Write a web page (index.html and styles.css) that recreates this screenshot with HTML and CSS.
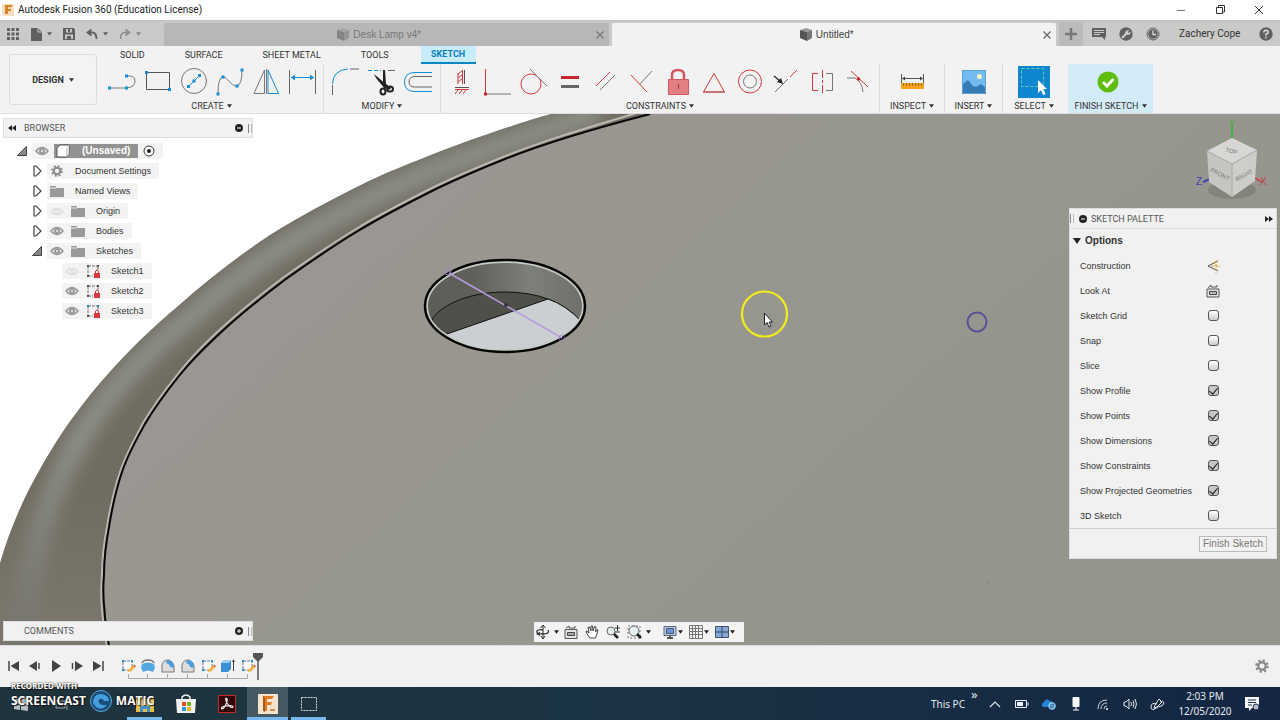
FILE: index.html
```html
<!DOCTYPE html>
<html lang="en">
<head>
<meta charset="utf-8">
<title>Autodesk Fusion 360 (Education License)</title>
<link rel="stylesheet" href="styles.css">
</head>
<body>
<svg class="defs" aria-hidden="true">
  <symbol id="eye" viewBox="0 0 14 12"><path d="M1 6Q7-1 13 6Q7 13 1 6Z" fill="#eee" stroke="#999" stroke-width="1.5"/><circle cx="7" cy="6" r="3" fill="#999"/><circle cx="7" cy="6" r="1" fill="#eee"/></symbol>
  <symbol id="eye-off" viewBox="0 0 14 12"><path d="M1 7Q7 0 13 7Q7 12 1 7Z" fill="none" stroke="#ddd" stroke-width="1.3"/><circle cx="7" cy="7" r="2" fill="none" stroke="#ddd"/><path d="M3 2L11 11" stroke="#ddd"/></symbol>
  <symbol id="folder" viewBox="0 0 14 12"><path d="M0 1H6V3H14V12H0Z" fill="#999"/><path d="M0 3H6" stroke="#eee"/></symbol>
  <symbol id="closed" viewBox="0 0 10 12"><path d="M2 1H4L9 6L4 11H2Z" fill="#fff" stroke="#444" stroke-width="1.2"/></symbol>
  <symbol id="open" viewBox="0 0 10 12"><path d="M9.500 1.500V10.500H.5Z" fill="#888" stroke="#444"/></symbol>
  <symbol id="sk" viewBox="0 0 14 14"><path d="M2 2H12M2 2V12M2 12H7M12 3V7" fill="none" stroke="#777" stroke-dasharray="3 1"/><path d="M1 1h2v2H1zM11 1h2v2h-2zM1 11h2v2H1z" fill="#555"/><path d="M8 9h6v5H8z" fill="#d8373d"/><path d="M9.500 9V7q1.500-2 3 0v2" fill="none" stroke="#d8373d"/></symbol>
  <symbol id="sk-blue" viewBox="0 0 14 14"><use href="#sk"/><path d="M1 1h2v2H1zM11 1h2v2h-2z" fill="#168dd6"/></symbol>
  <symbol id="gear" viewBox="0 0 14 14"><circle cx="7" cy="7" r="5.500" fill="none" stroke="#8d8d8d" stroke-width="2.600" stroke-dasharray="2.200 2.120"/><circle cx="7" cy="7" r="3.700" fill="none" stroke="#8d8d8d" stroke-width="2.400"/></symbol>
  <symbol id="cube" viewBox="0 0 14 14"><path d="M1 2L7 0L13 2L8 4Z" fill="#999"/><path d="M1 2L8 4V13L1 10Z" fill="#555"/><path d="M8 4L13 2V10L8 13Z" fill="#777"/></symbol>
  <symbol id="arrow" viewBox="0 0 6 4"><path d="M0 0H6L3 4Z" fill="currentColor"/></symbol>
  <symbol id="tsk" viewBox="0 0 16 16"><path d="M3 3H12V12H3Z" fill="#fafafa" stroke="#777" stroke-dasharray="3 1"/><path d="M2 2h2v2H2zM11 2h2v2h-2zM2 11h2v2H2z" fill="#2b8fd5"/><path d="M8.500 11.500L13 7.500L15 9.500L10.500 13.500L8 14Z" fill="#f3b23c"/><path d="M13 7.500l2 2l1-1l-2-2z" fill="#d9534f"/></symbol>
  <symbol id="fillet" viewBox="0 0 16 16"><path d="M2 14V7Q3 2 8 2H9Q14 4 14 9V14Z" fill="#ddd" stroke="#777"/><path d="M7 2Q14 2 14 10L10 9Q10 6 6 5Z" fill="#4a9fe0"/></symbol>
</svg>

<header class="titlebar">
  <svg width="12" height="14" viewBox="0 0 12 14"><path d="M0 1H12V13H2L0 11Z" fill="#f6ddbd"/><path d="M3 2H10V4H6V6H9V8H6V11H3Z" fill="#d98324"/></svg>
  <span class="title">Autodesk Fusion 360 (Education License)</span>
  <button class="win" aria-label="Minimise"><svg width="10" height="10"><path d="M1 5.500H9" stroke="#777"/></svg></button>
  <button class="win" aria-label="Restore"><svg width="10" height="10"><path d="M1.500 2.500h6v6h-6zM3.500 2V.5H9.500V7H8" fill="none" stroke="#333"/></svg></button>
  <button class="win" aria-label="Close"><svg width="10" height="10"><path d="M1 1L9 9M9 1L1 9" stroke="#333"/></svg></button>
</header>

<div class="docbar">
  <div class="quick">
    <button aria-label="Data panel"><svg width="12" height="12"><path d="M0 0h3v3H0zM4.500 0h3v3h-3zM9 0h3v3H9zM0 4.500h3v3H0zM4.500 4.500h3v3h-3zM9 4.500h3v3H9zM0 9h3v3H0zM4.500 9h3v3h-3zM9 9h3v3H9z" fill="#606060"/></svg></button>
    <button aria-label="File"><svg width="12" height="14"><path d="M1 1H8L12 5V14H1Z" fill="#606060"/><path d="M8 1V5H12" fill="none" stroke="#ccc"/></svg><svg class="ar"><use href="#arrow"/></svg></button>
    <button aria-label="Save"><svg width="12" height="12"><path d="M0 0H10.500L12 1.500V12H0Z" fill="#606060"/><path d="M3 1h6v3.500H3zM2 6.500h8V11H2z" fill="#c9c8c6"/><path d="M5 1h2v3H5zM4 8h4v3H4z" fill="#606060"/></svg></button>
    <button aria-label="Undo"><svg width="12" height="12"><path d="M5.500 1.500L1.500 4.500L5.500 7.500M2 4.500H6Q10.500 4.500 10.500 11" fill="none" stroke="#606060" stroke-width="1.800"/></svg><svg class="ar"><use href="#arrow"/></svg></button>
    <button class="dim" aria-label="Redo"><svg width="12" height="12"><path d="M6.500 1.500L10.500 4.500L6.500 7.500M10 4.500H6Q1.500 4.500 1.500 11" fill="none" stroke="#8b8b8b" stroke-width="1.600"/></svg><svg class="ar"><use href="#arrow"/></svg></button>
  </div>
  <div class="doc"><svg width="14" height="14" opacity=".5"><use href="#cube"/></svg><span>Desk Lamp v4*</span><button aria-label="Close tab"><svg width="8" height="8"><path d="M.5.5L7.500 7.500M7.500.5L.5 7.500" stroke="#777" stroke-width="1.300"/></svg></button></div>
  <div class="doc active"><svg width="14" height="14"><use href="#cube"/></svg><span>Untitled*</span><button aria-label="Close tab"><svg width="8" height="8"><path d="M.5.5L7.500 7.500M7.500.5L.5 7.500" stroke="#666" stroke-width="1.300"/></svg></button></div>
  <button class="plus" aria-label="New tab"><svg width="12" height="12"><path d="M6 0V12M0 6H12" stroke="#777" stroke-width="2.500"/></svg></button>
  <div class="account">
    <button aria-label="Notifications"><svg width="14" height="12"><path d="M0 0H14V9H13V12L10 9H0Z" fill="#606060"/><path d="M2 2.500H12M2 4.500H12M2 6.500H8" stroke="#ccc"/></svg></button>
    <button aria-label="Extensions"><svg width="14" height="14"><circle cx="7" cy="7" r="6.700" fill="#606060"/><path d="M3 11L7 7" stroke="#ccc" stroke-width="2.200"/><path d="M10.500 3L8.500 5L9.500 6L11.500 4.500Q12 8 8.500 8Q6 8 6 5.500Q6.500 3 10.500 3" fill="#ccc"/></svg></button>
    <button aria-label="Job status"><svg width="14" height="14"><circle cx="7" cy="7" r="6" fill="none" stroke="#606060"/><circle cx="7" cy="7" r="4.800" fill="#606060"/><path d="M7 3.500V7.500H10" fill="none" stroke="#ddd" stroke-width="1.300"/></svg></button>
    <button class="user">Zachery Cope</button>
    <button aria-label="Help"><svg width="14" height="14"><circle cx="7" cy="7" r="6.700" fill="#606060"/><path d="M4.800 5.500Q5 3.300 7 3.300Q9.300 3.400 9.200 5.300Q9 6.500 7 7.300V8.700M7 9.800V11.300" fill="none" stroke="#ddd" stroke-width="1.500"/></svg></button>
  </div>
</div>

<div class="ribbon">
  <button class="workspace">DESIGN <svg class="ar"><use href="#arrow"/></svg></button>
  <div class="ribbon-main">
    <nav class="tabs">
      <button>SOLID</button><button>SURFACE</button><button>SHEET METAL</button><button>TOOLS</button><button class="on">SKETCH</button>
    </nav>
    <div class="groups">
      <section class="group g-create">
        <div class="tools">
          <button aria-label="Line"><svg viewBox="0 0 36 36"><path d="M5 24H23Q31 23 31 17T23 12" fill="none" stroke="#777"/><path d="M4 22.500h3v3H4zM21 22.500h3v3h-3zM21 10.500h3v3h-3z" fill="#168dd6"/></svg></button>
          <button aria-label="Rectangle"><svg viewBox="0 0 36 36"><path d="M6.500 8.500H29.500V25.500H6.500Z" fill="none" stroke="#555"/><path d="M5 7h3v3H5zM28 24h3v3h-3z" fill="#168dd6"/></svg></button>
          <button aria-label="Circle"><svg viewBox="0 0 36 36"><circle cx="18" cy="17" r="12.500" fill="none" stroke="#777"/><path d="M12 23L24 11" stroke="#168dd6"/><path d="M11 21h3v3h-3zM16.500 15.500h3v3h-3zM22 10h3v3h-3z" fill="#168dd6"/></svg></button>
          <button aria-label="Spline"><svg viewBox="0 0 36 36"><path d="M6 30Q6 13 11 13C16 13 18 22 25 22Q30 21 30 6" fill="none" stroke="#777"/><path d="M4.500 28.500h3v3h-3zM9.500 11.500h3v3h-3zM23.500 20.500h3v3h-3zM28.500 4.500h3v3h-3z" fill="#168dd6"/></svg></button>
          <button aria-label="Mirror"><svg viewBox="0 0 36 36"><path d="M16.500 6V29.500H6Z" fill="none" stroke="#777"/><path d="M20 6V29.500H30.500Z" fill="none" stroke="#168dd6"/><path d="M18.500 5V30" stroke="#777"/></svg></button>
          <button aria-label="Dimension"><svg viewBox="0 0 36 36"><path d="M5.500 6V30M31.500 6V30" stroke="#666"/><path d="M7 13.500H30" stroke="#168dd6"/><path d="M7 13.500l4-3v6zM30 13.500l-4-3v6z" fill="#168dd6"/></svg></button>
        </div>
        <button class="glabel">CREATE <svg class="ar"><use href="#arrow"/></svg></button>
      </section>
      <section class="group g-modify">
        <div class="tools">
          <button aria-label="Fillet"><svg viewBox="0 0 36 36"><path d="M4.500 31V21M22 5H31" stroke="#666"/><path d="M4.500 20Q5 6 20 5" fill="none" stroke="#168dd6"/></svg></button>
          <button aria-label="Trim"><svg viewBox="0 0 36 36"><path d="M4 6.500H17" stroke="#168dd6" stroke-dasharray="4 2"/><path d="M24 6.500H31" stroke="#666"/><path d="M19 6L21 6L22 20L27 24L25 26L19 21Z" fill="#222"/><path d="M10 10L24 22L21 25L12 14Z" fill="#222"/><ellipse cx="19" cy="27.500" rx="2.500" ry="3" fill="none" stroke="#222" stroke-width="2"/><ellipse cx="26" cy="25" rx="3" ry="2.600" fill="none" stroke="#222" stroke-width="2"/></svg></button>
          <button aria-label="Offset"><svg viewBox="0 0 36 36"><path d="M32 8.500H14Q4.500 9 4.500 18T14 27.500H32" fill="none" stroke="#168dd6"/><path d="M32 12.500H14.500Q9 13 9 18T14.500 23H32" fill="none" stroke="#666"/></svg></button>
        </div>
        <button class="glabel">MODIFY <svg class="ar"><use href="#arrow"/></svg></button>
      </section>
      <section class="group g-constraints">
        <div class="tools">
          <button aria-label="Horizontal/Vertical"><svg viewBox="0 0 36 36"><path d="M20.500 6V20M11 23.500H25" stroke="#555"/><path d="M18.500 6V20M11 25.500H25M18 7l-4 3M18 11l-4 3M18 15l-4 3M14 9v11M14 26l-3 4M18 26l-3 4M22 26l-3 4" stroke="#d8373d"/></svg></button>
          <button aria-label="Coincident"><svg viewBox="0 0 36 36"><path d="M6 30H31" stroke="#777"/><path d="M5.500 5V30" stroke="#d8373d"/><path d="M4 28.500h3v3H4z" fill="#d02028"/></svg></button>
          <button aria-label="Tangent"><svg viewBox="0 0 36 36"><circle cx="15" cy="20" r="10" fill="none" stroke="#d8373d"/><path d="M14 5L31 22" stroke="#777"/></svg></button>
          <button aria-label="Equal"><svg viewBox="0 0 36 36"><path d="M9 12H27V15H9z" fill="#c7262c"/><path d="M9 21H27V24H9z" fill="#666"/></svg></button>
          <button aria-label="Parallel"><svg viewBox="0 0 36 36"><path d="M8 22L22 8" stroke="#d8373d"/><path d="M12 26L27 11" stroke="#777"/></svg></button>
          <button aria-label="Perpendicular"><svg viewBox="0 0 36 36"><path d="M7 11L23 28" stroke="#d8373d"/><path d="M16 20L28 7" stroke="#777"/></svg></button>
          <button aria-label="Fix"><svg viewBox="0 0 36 36"><path d="M12 16V11Q12 6 18 6T24 11V16" fill="none" stroke="#d25960" stroke-width="2.500"/><path d="M8.500 15.500H28.500V30.500H8.500Z" fill="#e27f82" stroke="#d25960"/><path d="M18.500 20V25" stroke="#a33"/></svg></button>
          <button aria-label="Midpoint"><svg viewBox="0 0 36 36"><path d="M18 9.500L28.500 28H7.500Z" fill="none" stroke="#d8373d"/><path d="M7 28H29" stroke="#a85557"/></svg></button>
          <button aria-label="Concentric"><svg viewBox="0 0 36 36"><circle cx="18" cy="17.500" r="11.500" fill="none" stroke="#d8373d"/><circle cx="18" cy="17.500" r="6.500" fill="none" stroke="#777"/></svg></button>
          <button aria-label="Collinear"><svg viewBox="0 0 36 36"><path d="M7 28L20 15" stroke="#777"/><path d="M22 13L29 6" stroke="#d8373d"/><path d="M6 12L12 17" stroke="#333" stroke-width="1.500"/><path d="M15 20L9 18L13 14Z" fill="#222"/></svg></button>
          <button aria-label="Symmetry"><svg viewBox="0 0 36 36"><path d="M14 9.500H8.500V26.500H14" fill="none" stroke="#d8373d"/><path d="M22 9.500H28.500V26.500H22" fill="none" stroke="#777"/><path d="M18.500 6V30" stroke="#d8373d" stroke-dasharray="8 2 3 2"/></svg></button>
          <button aria-label="Curvature"><svg viewBox="0 0 36 36"><path d="M11 7L28 23" stroke="#d8373d"/><path d="M7 14H15Q22 18 23 28" fill="none" stroke="#777"/><circle cx="18.500" cy="15" r="1.700" fill="#d02028"/></svg></button>
        </div>
        <button class="glabel">CONSTRAINTS <svg class="ar"><use href="#arrow"/></svg></button>
      </section>
      <section class="group g-inspect">
        <div class="tools"><button aria-label="Measure"><svg viewBox="0 0 36 36"><path d="M7.500 10V20M29.500 10V20M9 14.500H28" stroke="#555"/><path d="M8 14.500l3-2v4zM29 14.500l-3-2v4z" fill="#444"/><path d="M7 19H30V25H7z" fill="#f5a11c"/><path d="M9 20.500H29" stroke="#75520c" stroke-width="2" stroke-dasharray="1 2"/></svg></button></div>
        <button class="glabel">INSPECT <svg class="ar"><use href="#arrow"/></svg></button>
      </section>
      <section class="group g-insert">
        <div class="tools"><button aria-label="Insert image"><svg viewBox="0 0 36 36"><path d="M6 6H30V30H6z" fill="#72baf0"/><circle cx="23.500" cy="12.500" r="2.500" fill="#fdf6c8"/><path d="M6 21L12 16L17 22L20 23L25 20L30 24V30H6Z" fill="#347cb8"/><path d="M6.500 6.500h23v23h-23z" fill="none" stroke="#5d9fd0"/></svg></button></div>
        <button class="glabel">INSERT <svg class="ar"><use href="#arrow"/></svg></button>
      </section>
      <section class="group g-select">
        <div class="tools"><button aria-label="Select"><svg viewBox="0 0 36 36"><path d="M2 2H34V34H2z" fill="#0f86cf"/><path d="M5.500 4.500H27.500V22.500H5.500z" fill="none" stroke="#65d0a5" stroke-dasharray="3 2"/><path d="M22 16V29L25 26L27 31L29.500 30L27.500 25H31Z" fill="#fff"/></svg></button></div>
        <button class="glabel">SELECT <svg class="ar"><use href="#arrow"/></svg></button>
      </section>
      <section class="group g-finish">
        <div class="tools"><button aria-label="Finish sketch"><svg viewBox="0 0 36 36"><circle cx="15" cy="18" r="10.500" fill="#5fbe0d"/><path d="M10 18L14 22L20.500 15" fill="none" stroke="#fff" stroke-width="2.800"/></svg></button></div>
        <button class="glabel">FINISH SKETCH <svg class="ar"><use href="#arrow"/></svg></button>
      </section>
    </div>
  </div>
</div>

<main class="canvas">
  <svg class="scene" viewBox="0 114 1280 531" preserveAspectRatio="xMinYMin slice">
    <defs>
      <linearGradient id="plane" x1="0" y1="0" x2="1" y2=".5"><stop offset="0" stop-color="#9c9692"/><stop offset=".3" stop-color="#9a9691"/><stop offset=".5" stop-color="#98978f"/><stop offset="1" stop-color="#95958d"/></linearGradient>
      <linearGradient id="wall"><stop offset="0" stop-color="#5d5d57"/><stop offset=".3" stop-color="#60605b"/><stop offset=".65" stop-color="#7d7f7a"/><stop offset="1" stop-color="#6d6e69"/></linearGradient>
      <linearGradient id="rimshade" x1="0" y1="0" x2="0" y2="1"><stop offset="0" stop-color="#706d63"/><stop offset=".7" stop-color="#716c61"/><stop offset="1" stop-color="#7d786f"/></linearGradient>
      <linearGradient id="glow" x1="0" y1="0" x2="0" y2="1"><stop offset="0" stop-color="#8c8e84"/><stop offset=".6" stop-color="#8c8f86"/><stop offset="1" stop-color="#74736b"/></linearGradient>
      <filter id="soft" x="-20%" y="-20%" width="140%" height="140%"><feGaussianBlur stdDeviation="8"/></filter>
      <clipPath id="rim"><path d="M-2 646V570C8 534 22 498 50 452C66 425 86 399 107 375C131 348 152 328 177 307C204 283 233 260 261 241C289 222 318 207 345 193C372 179 390 171 421 159C455 145 511 125 551 114H652V646Z"/></clipPath>
      <clipPath id="hole"><ellipse cx="505" cy="306" rx="79" ry="45"/></clipPath>
    </defs>
    <rect y="114" width="1280" height="531" fill="#fff"/>
    <g clip-path="url(#rim)">
      <rect x="-2" y="114" width="660" height="532" fill="url(#rimshade)"/>
      <path d="M20 660C26 575 42 510 67 463C85 425 105 400 128 374C148 352 166 336 187 320C230 281 280 246 337 216C390 186 440 164 600 112" fill="none" stroke="url(#glow)" stroke-width="22" filter="url(#soft)"/>
    </g>
    <path d="M109 646C107 634 105 622 104.500 610C103 598 103 587 104 575C104 558 106 543 109 527C112 508 116 490 122 472C128 454 136 440 145 424C155 407 167 391 179 376C191 361 200 352 215 338C237 317 262 297 286 279C310 262 333 246 358 231C384 215 412 201 438 188C461 177 480 169 505 159C550 141 600 127 650 114H1280V646Z" fill="url(#plane)"/>
    <path d="M107 646C105 634 103 622 102 610C101 598 101 587 102 575C102 558 104 543 107 527C110 508 114 490 120 472C126 454 134 440 143 423C153 406 165 390 177 375C189 360 198 350 213 336C235 315 260 295 284 277C308 260 331 244 356 229C382 213 410 199 436 186C459 175 478 167 503 157C548 139 590 127 640 112" fill="none" stroke="#bcb8b1" stroke-width="2"/>
    <path d="M109 646C107 634 105 622 104.500 610C103 598 103 587 104 575C104 558 106 543 109 527C112 508 116 490 122 472C128 454 136 440 145 424C155 407 167 391 179 376C191 361 200 352 215 338C237 317 262 297 286 279C310 262 333 246 358 231C384 215 412 201 438 188C461 177 480 169 505 159C550 141 600 127 650 114" fill="none" stroke="#080808" stroke-width="2"/>
    <g clip-path="url(#hole)">
      <rect x="424" y="258" width="164" height="98" fill="url(#wall)"/>
      <path d="M432 319C446 300 478 292 505 292Q555 292 582 322L570 356H440Z" fill="#50504a" stroke="#111"/>
      <path d="M444 335L548 299Q566 305 582 322L575 356H435Z" fill="#cbcfd1"/>
      <path d="M444 335L548 299Q566 305 582 322" fill="none" stroke="#111"/>
    </g>
    <ellipse cx="505" cy="306" rx="78" ry="44" fill="none" stroke="#c6cac5" stroke-width="2"/>
    <ellipse cx="505" cy="306" rx="80" ry="46" fill="none" stroke="#050505" stroke-width="2.500"/>
    <path d="M449 273L562 338" stroke="#b79ce0" stroke-width="1.500"/>
    <circle cx="448" cy="272" r="3" fill="none" stroke="#9b86c4"/><circle cx="562" cy="338" r="3" fill="none" stroke="#9b86c4" opacity=".6"/><circle cx="506" cy="305" r="2" fill="#37363e"/>
    <circle cx="977" cy="322" r="9.500" fill="none" stroke="#5a5199" stroke-width="2"/>
    <circle cx="989" cy="583" r="1" fill="#85857e"/>
    <circle cx="764.500" cy="314" r="22.500" fill="none" stroke="#f4ec18" stroke-width="2.200"/>
    <path d="M764.500 313V325L767 322.500L769 327L771 326L769 322H772.500Z" fill="#fff" stroke="#222"/>
  </svg>

  <aside class="browser">
    <div class="bar">
      <button class="collapse" aria-label="Collapse"><svg width="8" height="6"><path d="M4 0V6L0 3ZM8 0V6L4 3Z" fill="#222"/></svg></button>
      <span>BROWSER</span>
      <button aria-label="Minimise browser"><svg width="8" height="8"><circle cx="4" cy="4" r="4" fill="#222"/><path d="M2 4H6" stroke="#fff"/></svg></button><i class="grip"></i>
    </div>
    <ul class="tree">
      <li class="root"><svg class="tw"><use href="#open"/></svg><div class="node"><svg class="ic"><use href="#eye"/></svg><span class="sel"><svg width="14" height="14"><path d="M1 4L4 1H13V10L10 13H1Z" fill="#fff" stroke="#555"/><path d="M10 4V13L13 10V1Z" fill="#ddd"/></svg><b>(Unsaved)</b></span><svg width="12" height="12"><circle cx="6" cy="6" r="5" fill="#fff" stroke="#333"/><circle cx="6" cy="6" r="2" fill="#222"/></svg></div></li>
      <li class="l1"><svg class="tw"><use href="#closed"/></svg><div class="node"><svg class="ic"><use href="#gear"/></svg><span>Document Settings</span></div></li>
      <li class="l1"><svg class="tw"><use href="#closed"/></svg><div class="node"><svg class="ic"><use href="#folder"/></svg><span>Named Views</span></div></li>
      <li class="l1"><svg class="tw"><use href="#closed"/></svg><div class="node"><svg class="ic"><use href="#eye-off"/></svg><svg class="ic"><use href="#folder"/></svg><span>Origin</span></div></li>
      <li class="l1"><svg class="tw"><use href="#closed"/></svg><div class="node"><svg class="ic"><use href="#eye"/></svg><svg class="ic"><use href="#folder"/></svg><span>Bodies</span></div></li>
      <li class="l1"><svg class="tw"><use href="#open"/></svg><div class="node"><svg class="ic"><use href="#eye"/></svg><svg class="ic"><use href="#folder"/></svg><span>Sketches</span></div></li>
      <li class="l2"><div class="node"><svg class="ic"><use href="#eye-off"/></svg><svg class="ic tall"><use href="#sk"/></svg><span>Sketch1</span></div></li>
      <li class="l2"><div class="node"><svg class="ic"><use href="#eye"/></svg><svg class="ic tall"><use href="#sk"/></svg><span>Sketch2</span></div></li>
      <li class="l2"><div class="node"><svg class="ic"><use href="#eye"/></svg><svg class="ic tall"><use href="#sk-blue"/></svg><span>Sketch3</span></div></li>
    </ul>
  </aside>

  <svg class="viewcube" width="76" height="90" viewBox="0 0 76 90">
    <ellipse cx="37" cy="72" rx="24" ry="9" fill="#777870" opacity=".6"/>
    <path d="M37 4V20" stroke="#45b045" stroke-width="2"/><path d="M35 2L37 6L40 2" fill="none" stroke="#45b045"/>
    <path d="M15 61L8 64" stroke="#4540b4" stroke-width="2"/><path d="M60 60L67 64" stroke="#c24a50" stroke-width="2"/>
    <path d="M12 33L37 20L62 32L37 46Z" fill="#d7d7d5"/><path d="M12 33L37 46V79L14 64Z" fill="#c5c5c2"/><path d="M62 32L37 46V79L60 63Z" fill="#cdcdca"/>
    <path d="M12 33L37 46L62 32M37 46V79" fill="none" stroke="#aaa"/>
    <g font-family="Liberation Sans, sans-serif" font-size="6" text-anchor="middle" fill="#777"><text transform="translate(36 35) rotate(15)">TOP</text><text transform="translate(24 58) rotate(28)">FRONT</text><text transform="translate(50 59) rotate(-28)">RIGHT</text></g>
    <g font-family="Liberation Sans, sans-serif" font-size="10"><text x="1" y="67" fill="#4540b4">Z</text><text x="65" y="67" fill="#b9474c">X</text></g>
  </svg>

  <aside class="palette">
    <div class="phead"><i class="grip"></i><button aria-label="Minimise palette"><svg width="8" height="8"><circle cx="4" cy="4" r="4" fill="#222"/><path d="M2 4H6" stroke="#fff"/></svg></button><span>SKETCH PALETTE</span><button aria-label="Dock"><svg width="8" height="6"><path d="M0 0V6L4 3ZM4 0V6L8 3Z" fill="#222"/></svg></button></div>
    <button class="options"><svg width="8" height="6"><path d="M0 0H8L4 6Z" fill="#222"/></svg>Options</button>
    <div class="prow"><span>Construction</span><button aria-label="Construction"><svg width="14" height="14"><path d="M12 2L2 7L12 12" fill="none" stroke="#555"/><path d="M10 1V14M5 7H14M7 3L13 9" stroke="#f0a03c" stroke-dasharray="3 1"/></svg></button></div>
    <div class="prow"><span>Look At</span><button aria-label="Look at"><svg width="14" height="14"><path d="M1 5H13V13H1z" fill="#e4e4e4" stroke="#555"/><path d="M3.500 7.500h7v3h-7z" fill="#bbb" stroke="#444"/><path d="M2 4L5 1V3H11V1" fill="none" stroke="#555"/></svg></button></div>
    <label class="prow"><span>Sketch Grid</span><input type="checkbox"></label>
    <label class="prow"><span>Snap</span><input type="checkbox"></label>
    <label class="prow"><span>Slice</span><input type="checkbox"></label>
    <label class="prow"><span>Show Profile</span><input type="checkbox" checked></label>
    <label class="prow"><span>Show Points</span><input type="checkbox" checked></label>
    <label class="prow"><span>Show Dimensions</span><input type="checkbox" checked></label>
    <label class="prow"><span>Show Constraints</span><input type="checkbox" checked></label>
    <label class="prow"><span>Show Projected Geometries</span><input type="checkbox" checked></label>
    <label class="prow"><span>3D Sketch</span><input type="checkbox"></label>
    <div class="pfoot"><button>Finish Sketch</button></div>
  </aside>

  <div class="comments bar"><span>COMMENTS</span><button aria-label="Expand comments"><svg width="8" height="8"><circle cx="4" cy="4" r="4" fill="#222"/><path d="M2 4H6M4 2V6" stroke="#fff"/></svg></button><i class="grip"></i></div>

  <div class="navbar">
    <button class="w24" aria-label="Orbit"><svg width="14" height="14"><path d="M7 0V14M4.500 3L7 0L9.500 3M5 11l2 3l2-3" fill="none" stroke="#333"/><path d="M12 5Q14 9 7 9T1 6Q3 4 7 5" fill="none" stroke="#333" stroke-width="1.300"/><path d="M0 9l4-2v4z" fill="#333"/></svg><svg class="ar"><use href="#arrow"/></svg></button>
    <button class="w22" aria-label="Look at"><svg width="14" height="14"><path d="M1 4.500H13V13.500H1z" fill="#e4e4e4" stroke="#555"/><path d="M3.500 7.500h7v3h-7z" fill="#aaa" stroke="#444"/><path d="M2 3L5 1V3H11V1" fill="none" stroke="#555"/></svg></button>
    <button class="w22" aria-label="Pan"><svg width="14" height="14"><path d="M5 13L1.500 8L1 6L3 7L4 8L3 2.500L4.500 2L6 6L6 1H7.500L8 6L9.500 1.500L11 2L10.500 7L12 4.500L13 5L11.500 10L10.500 13Z" fill="#fff" stroke="#444"/></svg></button>
    <button class="w22" aria-label="Zoom"><svg width="14" height="14"><circle cx="5" cy="6" r="4" fill="#e8f0f2" stroke="#666"/><path d="M8 9L12 13" stroke="#222" stroke-width="2.500"/><path d="M11.500 0V6M9 3H14M9 7H14" stroke="#333"/></svg></button>
    <button class="w32" aria-label="Fit"><svg width="16" height="14"><path d="M1 1H13V13H1Z" fill="none" stroke="#777" stroke-dasharray="2 2"/><circle cx="7" cy="6" r="5" fill="#e3eff0" stroke="#666"/><path d="M10 9L14 13" stroke="#222" stroke-width="2.500"/></svg><svg class="ar"><use href="#arrow"/></svg></button>
    <button class="w26" aria-label="Display"><svg width="14" height="14"><path d="M1 1.500H13V10.500H1z" fill="#b8ccec" stroke="#567"/><path d="M3.500 3.500h7v5h-7z" fill="#6f96d6" stroke="#456"/><path d="M4 13H10M7 10v3" stroke="#555" stroke-width="2"/></svg><svg class="ar"><use href="#arrow"/></svg></button>
    <button class="w26" aria-label="Grid"><svg width="14" height="14"><path d="M.5.5h13v13H.5zM3.500 0V14M6.500 0V14M9.500 0V14M0 3.500H14M0 6.500H14M0 9.500H14" fill="none" stroke="#777"/></svg><svg class="ar"><use href="#arrow"/></svg></button>
    <button class="w26" aria-label="Viewports"><svg width="14" height="12"><path d="M.5.5h13v11H.5z" fill="#85a5db" stroke="#456"/><path d="M7 0V12M0 6H14" stroke="#345"/></svg><svg class="ar"><use href="#arrow"/></svg></button>
  </div>
</main>

<footer class="timeline">
  <div class="play">
    <button aria-label="Start"><svg width="12" height="12"><path d="M1 1V11" stroke="#444" stroke-width="1.500"/><path d="M11 1V11L2.500 6Z" fill="#444"/></svg></button>
    <button aria-label="Back"><svg width="12" height="12"><path d="M8 1V11L0 6Z" fill="#444"/><path d="M10 3V9" stroke="#444" stroke-width="1.500"/></svg></button>
    <button aria-label="Play"><svg width="12" height="12"><path d="M2 0V12L11 6Z" fill="#444"/></svg></button>
    <button aria-label="Forward"><svg width="12" height="12"><path d="M4 1V11L12 6Z" fill="#444"/><path d="M1.500 3V9" stroke="#444" stroke-width="1.500"/></svg></button>
    <button aria-label="End"><svg width="12" height="12"><path d="M11 1V11" stroke="#444" stroke-width="1.500"/><path d="M1 1V11L9.500 6Z" fill="#444"/></svg></button>
  </div>
  <div class="track">
    <div class="feats">
      <svg><use href="#tsk"/></svg>
      <svg viewBox="0 0 16 16"><path d="M2 6Q8 3 14 6L15 10L13 14Q8 11 3 14L1 10Z" fill="#54a8e2"/><path d="M2 5Q3 2 8 2T14 5" fill="none" stroke="#777" stroke-width="1.500"/></svg>
      <svg><use href="#fillet"/></svg><svg><use href="#fillet"/></svg><svg><use href="#tsk"/></svg>
      <svg viewBox="0 0 16 16"><path d="M1 5L4 2H11V11L8 14H1Z" fill="#3b8fd4"/><path d="M1 5L4 2H11L9 5Z" fill="#9bd0f4"/><path d="M13.500 2V13" stroke="#444"/><path d="M12 4l1.500-3L15 4z" fill="#444"/></svg>
      <svg><use href="#tsk"/></svg>
    </div>
    <svg class="ticks" width="140" height="6"><path d="M10.500 0V4.500H129.500V0M29.500 0V4M49.500 0V4M69.500 0V4M89.500 0V4M109.500 0V4" fill="none" stroke="#aaa"/></svg>
  </div>
  <svg class="marker" width="10" height="28"><path d="M0 1H10V5L6 9H4L0 5Z" fill="#555"/><path d="M5 7V28" stroke="#555" stroke-width="1.500"/></svg>
  <button class="prefs" aria-label="Preferences"><svg width="14" height="14"><use href="#gear"/></svg></button>
</footer>

<div class="taskbar">
  <div class="apps">
    <button aria-label="Start"><svg width="14" height="14"><path d="M0 2L6 1V7H0zM7 1L14 0V7H7zM0 8H6V13L0 12zM7 8H14V14L7 13z" fill="#b8c0c4"/></svg></button>
    <button aria-label="Task view"><svg width="16" height="14"><path d="M2 4H11V11H2zM0 1V3M13 1V13" fill="none" stroke="#9ba5aa"/></svg></button>
    <span class="spacer"></span>
    <button class="run" aria-label="File Explorer"><svg width="20" height="18"><path d="M1 2H8L10 4H19V17H1z" fill="#e9bd45"/><path d="M1 6H19V10H1z" fill="#f9de89"/><path d="M5 17V11H15V17H12V14H8V17Z" fill="#3f91ce"/></svg></button>
    <button aria-label="Store"><svg width="20" height="20"><path d="M6 6V3Q10-1 14 3V6" fill="none" stroke="#eee" stroke-width="1.500"/><path d="M0 5H20L19 19H1Z" fill="#f2f2f2"/><path d="M6 8h4v4H6z" fill="#e64a27"/><path d="M11 8h4v4h-4z" fill="#76b82a"/><path d="M6 13h4v4H6z" fill="#249ad8"/><path d="M11 13h4v4h-4z" fill="#f2b51d"/></svg></button>
    <button aria-label="Acrobat"><svg width="18" height="18"><path d="M.5.5h17v17H.5z" fill="#30080a" stroke="#c52a25"/><path d="M8 3Q10 3 8.500 8Q6 14 4 14Q2 12 8 11Q15 10 15 12Q13 14 9 8Q7 4 8 3" fill="none" stroke="#f0eaea" stroke-width="1.200"/></svg></button>
    <button class="run current" aria-label="Fusion 360"><svg width="20" height="20"><path d="M0 0H20V20H0z" fill="#f5e3ce"/><path d="M5 2H16L14 5H9V8H14L13 11H9V17H6Z" fill="#df7d24"/><path d="M5 2V17L7 18V4Z" fill="#a7591b"/><path d="M12 16H17" stroke="#c99259" stroke-width="2"/></svg></button>
    <button class="run" aria-label="Recorder"><svg width="18" height="16"><path d="M1.500 1.500h15v13h-15z" fill="none" stroke="#d6dde0" stroke-dasharray="2 1"/></svg></button>
  </div>
  <div class="tray">
    <span class="pc">This PC</span><span class="more">»</span>
    <button aria-label="Hidden icons"><svg width="12" height="8"><path d="M1 7L6 2L11 7" fill="none" stroke="#dde4ea" stroke-width="1.200"/></svg></button>
    <button aria-label="Battery"><svg width="14" height="8"><path d="M.5.5h11v7H.5zM13 2.500v3" fill="none" stroke="#eef"/><path d="M2 2h6v4H2z" fill="#eef"/></svg></button>
    <button aria-label="OneDrive"><svg width="15" height="12"><path d="M2 9Q-1 6 3 4Q5-1 9 3Q13 3 13 9Z" fill="#2683d3"/><circle cx="11" cy="8" r="3.700" fill="#92c8ee"/><path d="M9 7H13L12 5.500M13 9H9L10 10.500" fill="none" stroke="#135b99"/></svg></button>
    <button aria-label="Microphone"><svg width="10" height="14"><rect x="1.500" y="0" width="7" height="10" rx="1" fill="#f5f7fa"/><path d="M5 10V13M2 13H8" stroke="#f5f7fa"/></svg></button>
    <button aria-label="Wi-Fi"><svg width="13" height="12"><path d="M2 11Q2 2 11 2M5 11Q5 5 11 5M8 11Q8 8 11 8" fill="none" stroke="#c5cfda"/><circle cx="11" cy="11" r="1" fill="#fff"/></svg></button>
    <button aria-label="Volume"><svg width="14" height="12"><path d="M1 4H3L6 1V11L3 8H1ZM8 4Q9 6 8 8M10 2.500Q12 6 10 9.500M12 1Q15 6 12 11" fill="none" stroke="#dde4ea"/></svg></button>
    <button class="pen" aria-label="Pen"><svg width="16" height="14"><path d="M10 2L13 5L8 10L5 11L6 8ZM8 7Q2 5 2 10T9 10Q15 9 15 6Q14 3 11 5" fill="none" stroke="#e5eaf0"/></svg></button>
    <time><span>2:03 PM</span><span>12/05/2020</span></time>
    <button aria-label="Action centre"><svg width="16" height="14"><path d="M1 0H15V11H8L5 14V11H1Z" fill="#f4f6f8"/><path d="M4 3H12M4 5.500H12M4 8H8" stroke="#203048"/><circle cx="12" cy="10" r="3" fill="#b3bcc6" stroke="#203048"/></svg></button>
  </div>
</div>

<div class="watermark">
  <span class="rec">RECORDED WITH</span>
  <div class="brand"><span>SCREENCAST</span><svg width="22" height="22"><circle cx="11" cy="11" r="10.500" fill="#194e7c" stroke="#5da5d8"/><path d="M3 13Q3 4 11 4Q19 5 19 11H14Q13 8 10 9Q7 11 10 14Q13 16 17 15Q13 20 8 18Q4 16 3 13" fill="#43a0dc"/></svg><span>MATIC</span></div>
</div>
</body>
</html>
```

FILE: styles.css
```css
* { box-sizing: border-box; }
body {
  margin: 0;
  min-height: 100vh;
  display: flex;
  flex-direction: column;
  position: relative;
  background: #f1f1f1;
  color: #333;
  font: 9px/12px "Liberation Sans", Arial, sans-serif;
  overflow-x: hidden;
}
button { border: 0; padding: 0; margin: 0; background: none; color: inherit; font: inherit; display: inline-flex; align-items: center; justify-content: center; white-space: nowrap; }
svg { display: block; flex: none; }
.defs { position: absolute; width: 0; height: 0; }
.ar { width: 5px; height: 4px; }

.titlebar { height: 20px; display: flex; align-items: center; background: #fff; padding: 0 4px 0 2px; gap: 4px; color: #222; }
.title { flex: 1; font: 10px/16px Roboto, sans-serif; }
.win { width: 35px; height: 20px; }

.docbar { height: 26px; display: flex; background: #cacac8; border-top: 2px solid #c4c3bd; gap: 3px; }
.quick { width: 161px; display: flex; align-items: center; padding-left: 7px; gap: 11px; color: #606060; }
.quick button { gap: 5px; }
.quick .dim { color: #888; }
.doc { flex: 1; display: flex; align-items: center; margin-top: 1px; gap: 3px; background: #b7b7b7; color: #777; font-size: 10px; border-radius: 2px 2px 0 0; }
.doc::before { content: ""; flex: 1; }
.doc span { white-space: nowrap; padding-right: 10px; }
.doc button { flex: 1; justify-content: flex-end; padding-right: 5px; }
.doc.active { background: #f2f2f2; color: #444; }
.plus { width: 24px; background: #bbb; }
.account { width: 194px; display: flex; align-items: center; padding-left: 6px; gap: 13px; }
.account .user { flex: 1; justify-content: flex-start; padding-left: 6px; font-size: 10px; font-family: Roboto, sans-serif; }
.account button:last-child { margin-right: 7px; }

.ribbon { display: flex; height: 68px; background: #f2f2f2; border-bottom: 1px solid #ddd; font: 9px/12px Roboto, sans-serif; }
.workspace { width: 88px; height: 51px; margin: 8px 0 0 9px; border: 1px solid #ddd; border-radius: 3px; gap: 5px; font-weight: 700; background: #f3f3f3; }
.ribbon-main { flex: 1; display: flex; flex-direction: column; }
.tabs { display: flex; height: 18px; padding-left: 23px; gap: 40px; }
.tabs .on { width: 55px; margin-left: -8px; background: #c9ecfb; color: #0a7fbd; font-weight: 700; border-bottom: 2px solid #0a87c8; }
.groups { display: flex; flex: 1; }
.group { display: flex; flex-direction: column; align-items: center; border-right: 1px solid #dcdcdc; }
.tools { display: flex; height: 36px; }
.tools button, .tools svg { width: 36px; height: 36px; }
.glabel { height: 12px; gap: 3px; }
.g-create { width: 227px; padding: 0 4px 0 7px; }
.g-modify { width: 117px; }
.g-constraints { width: 439px; }
.g-inspect { width: 65px; }
.g-insert { width: 58px; }
.g-select { width: 62px; border: 0; }
.g-finish { width: 85px; margin-left: 3px; background: #d3ebf6; border: 0; }

.canvas { position: relative; flex: 1; min-height: 531px; overflow: hidden; background: #fff; }
.scene { position: absolute; inset: 0; width: 100%; height: 100%; }
.browser { position: absolute; left: 3px; top: 4px; width: 250px; }
.bar { height: 20px; display: flex; align-items: center; background: #f1f1f1; border: 1px solid #ddd; font: 9px/12px Roboto, sans-serif; color: #555; }
.bar span { flex: 1; padding-left: 20px; }
.bar .collapse + span { padding-left: 8px; }
.bar .collapse { margin-left: 4px; }
.grip { width: 4px; height: 9px; margin: 0 0 0 5px; border-left: 1px solid #888; border-right: 1px solid #bbb; }
.tree { list-style: none; margin: 3px 0 0; padding: 0; }
.tree li { display: flex; align-items: center; height: 20px; gap: 5px; }
.root { padding-left: 14px; }
.l1 { padding-left: 29px; }
.l2 { padding-left: 59px; }
.tw { width: 10px; height: 12px; }
.node { display: flex; align-items: center; height: 16px; padding: 0 8px 0 3px; gap: 7px; background: #f3f3f3; }
.node .ic { width: 14px; height: 12px; }
.node .tall { height: 14px; }
.node span { padding-left: 4px; }
.node .sel { display: flex; gap: 12px; align-items: center; height: 14px; margin: 0 -2px; padding: 0 8px 0 2px; background: #929292; color: #fff; }
.sel b { font-size: 10px; }
.viewcube { position: absolute; top: 4px; right: 9px; }

.palette { position: absolute; top: 94px; right: 3px; width: 208px; background: #f1f1f1; border: 1px solid #ddd; }
.phead { display: flex; align-items: center; height: 20px; padding: 0 3px 0 0; border-bottom: 1px solid #ddd; font: 9px/12px Roboto, sans-serif; color: #555; }
.phead .grip { margin: 0 5px 0 0; }
.phead span { flex: 1; padding-left: 4px; }
.options { height: 24px; padding-left: 3px; gap: 4px; font-size: 10px; font-weight: 700; }
.prow { display: flex; align-items: center; justify-content: space-between; height: 25px; padding: 0 56px 0 10px; }
.prow span { white-space: nowrap; }
.prow input { appearance: none; width: 11px; height: 11px; margin: 0 1px 0 0; border: 1px solid #555; border-radius: 3px; background: linear-gradient(#fff, #ccc); display: grid; place-items: center; }
.prow input:checked { background: #c6c6c6; }
.prow input:checked::after { content: ""; width: 4px; height: 7px; margin-bottom: 2px; border: solid #111; border-width: 0 1px 1px 0; transform: rotate(40deg); }
.pfoot { height: 30px; border-top: 1px solid #ccc; display: flex; align-items: center; justify-content: flex-end; padding-right: 9px; }
.pfoot button { width: 68px; height: 16px; border: 1px solid #bbb; color: #777; font-size: 10px; }
.comments { position: absolute; left: 3px; bottom: 4px; width: 250px; }
.navbar { position: absolute; left: 534px; bottom: 3px; width: 210px; height: 20px; display: flex; align-items: center; padding-left: 2px; background: #f3f3f3; color: #222; }
.navbar button { gap: 4px; justify-content: flex-start; }
.navbar .w24 { width: 28px; }
.navbar .w22 { width: 21px; }
.navbar .w32 { width: 36px; gap: 3px; }
.navbar .w26 { width: 26px; gap: 1px; }

.timeline { height: 42px; display: flex; align-items: center; background: #f1f1f1; padding: 0 11px 2px 8px; border-top: 1px solid #ddd; }
.play { display: flex; gap: 9px; width: 110px; }
.play button { width: 12px; height: 20px; }
.track { width: 140px; height: 28px; padding-top: 6px; }
.feats { display: flex; gap: 4px; padding-left: 2px; }
.feats svg { width: 16px; height: 16px; }
.marker { margin-left: -5px; }
.prefs { margin-left: auto; }

.taskbar { height: 33px; display: flex; justify-content: space-between; background: linear-gradient(90deg, #20343d, #1b3443 45%, #142643); color: #e5e9ee; }
.apps { display: flex; }
.apps button { width: 41px; }
.apps .spacer { width: 42px; }
.apps .run { border-bottom: 3px solid #76b7ed; padding-top: 3px; width: 35px; margin: 0 3px; }
.apps .current { width: 41px; margin: 0; background: #465862; }
.tray { display: flex; align-items: center; font: 10px/14px "Noto Sans", sans-serif; }
.tray button { width: 27px; height: 33px; }
.tray .more { align-self: flex-start; width: 16px; padding-left: 6px; font-size: 13px; }
.tray time { width: 66px; margin-left: 2px; display: flex; flex-direction: column; align-items: center; line-height: 15px; }
.tray time + button { margin-right: 15px; }
.watermark { position: absolute; left: 11px; bottom: 8px; color: #fff; font: 700 12px/22px "Open Sans", sans-serif; text-shadow: 0 0 2px #000, 1px 1px 1px #222; }
.rec { display: block; font-size: 8px; line-height: 8px; }
.brand { display: flex; gap: 4px; align-items: center; }
```
